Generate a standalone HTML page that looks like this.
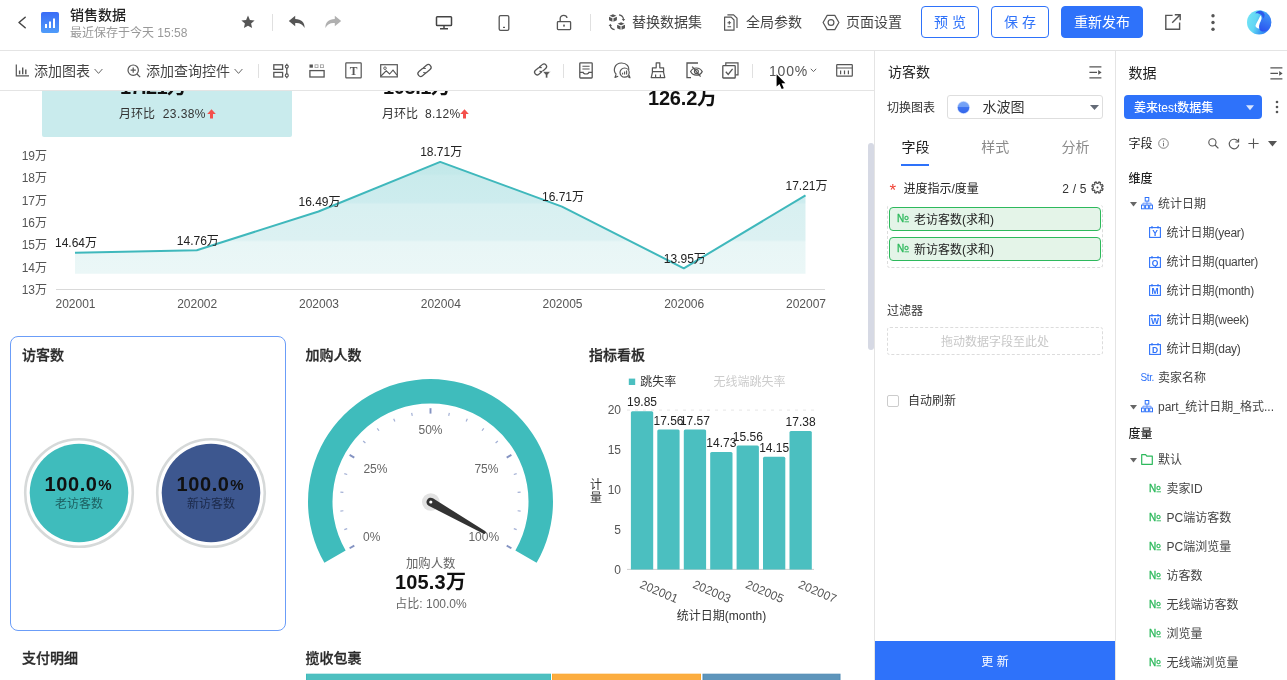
<!DOCTYPE html>
<html lang="zh-CN">
<head>
<meta charset="utf-8">
<title>销售数据</title>
<style>
*{box-sizing:border-box;margin:0;padding:0}
html,body{width:1287px;height:680px;overflow:hidden;background:#fff}
body{font-family:"Liberation Sans","Noto Sans CJK SC",sans-serif;font-size:12px;color:#333;position:relative;will-change:transform}
.abs{position:absolute}
.t{position:absolute;white-space:nowrap;line-height:1}
svg{position:absolute;overflow:visible}
svg text{font-family:"Liberation Sans","Noto Sans CJK SC",sans-serif}
/* header */
#hdr{position:absolute;left:0;top:0;width:1287px;height:51px;border-bottom:1px solid #e4e4e4;background:#fff}
#tb{position:absolute;left:0;top:51px;width:874px;height:40px;border-bottom:1px solid #e4e4e4;background:#fff}
.vsep{position:absolute;width:1px;background:#e0e0e0}
.btn{position:absolute;top:6px;height:32px;border-radius:4px;font-size:14px;line-height:30px;text-align:center;border:1px solid #2e72fa;color:#2e72fa;background:#fff}
.btn.pri{background:#2e72fa;color:#fff}
/* canvas */
#cv{position:absolute;left:0;top:91px;width:875px;height:589px;overflow:hidden;background:#fff}
/* panels */
#p1{position:absolute;left:874px;top:51px;width:241px;height:629px;border-left:1px solid #e4e4e4;background:#fff}
#p2{position:absolute;left:1115px;top:51px;width:172px;height:629px;border-left:1px solid #e4e4e4;background:#fff}
.fld{position:absolute;left:13px;width:213px;height:26px;border:1px solid #2db95c;border-radius:3px;background:#e3f4e8;font-size:12px;line-height:24px;color:#222}
.no{color:#2db95c;font-size:9px;letter-spacing:-0.5px}
.row{position:absolute;left:0;height:20px;line-height:20px;font-size:12px;color:#444;white-space:nowrap}
</style>
</head>
<body>
<div id="hdr">
<!-- back chevron -->
<svg style="left:16px;top:14px" width="14" height="16" viewBox="0 0 14 16"><path d="M9.2 3.2 L3 8.5 L9.2 13.8" fill="none" stroke="#444" stroke-width="1.5" stroke-linecap="round" stroke-linejoin="round"/></svg>
<!-- app icon -->
<svg style="left:41px;top:12px" width="18" height="21" viewBox="0 0 18 21"><defs><linearGradient id="gi" x1="0" y1="0" x2="0" y2="1"><stop offset="0" stop-color="#3a6cf6"/><stop offset="1" stop-color="#4f9cfa"/></linearGradient></defs><rect width="18" height="21" rx="2" fill="url(#gi)"/><rect x="4" y="12" width="2" height="4" fill="#fff"/><rect x="8" y="9.5" width="2" height="6.5" fill="#fff"/><rect x="12" y="6.5" width="2" height="9.5" fill="#fff"/></svg>
<div class="t" style="left:70px;top:8px;font-size:14px;font-weight:500;color:#222;line-height:15px">销售数据</div>
<div class="t" style="left:70px;top:27px;font-size:12px;color:#999;line-height:13px">最近保存于今天 15:58</div>
<!-- star -->
<svg style="left:241px;top:15px" width="14" height="14" viewBox="0 0 14 14"><path d="M7 0.6 L8.9 4.9 L13.6 5.4 L10.1 8.5 L11.1 13.1 L7 10.7 L2.9 13.1 L3.9 8.5 L0.4 5.4 L5.1 4.9 Z" fill="#555"/></svg>
<div class="vsep" style="left:272px;top:14px;height:17px"></div>
<!-- undo -->
<svg style="left:288px;top:15px" width="18" height="14" viewBox="0 0 18 14"><path d="M7.2 0.8 L0.8 6 L7.2 11.2 L7.2 8 C11.5 7.6 14.5 9 16.6 13 C16.8 7.6 13.5 4.2 7.2 4 Z" fill="#555"/></svg>
<!-- redo -->
<svg style="left:324px;top:15px" width="18" height="14" viewBox="0 0 18 14"><path d="M10.8 0.8 L17.2 6 L10.8 11.2 L10.8 8 C6.5 7.6 3.5 9 1.4 13 C1.2 7.6 4.5 4.2 10.8 4 Z" fill="#b0b0b0"/></svg>
<!-- monitor -->
<svg style="left:435px;top:15px" width="18" height="16" viewBox="0 0 18 16"><rect x="1.5" y="1.8" width="15" height="8.8" rx="0.8" fill="none" stroke="#444" stroke-width="1.5"/><path d="M9 10.6 V13.6 M5 13.8 H13" stroke="#444" stroke-width="1.5" fill="none"/></svg>
<!-- phone -->
<svg style="left:498px;top:14px" width="12" height="18" viewBox="0 0 12 18"><rect x="1.2" y="1.6" width="9.6" height="14.8" rx="1.4" fill="none" stroke="#555" stroke-width="1.3"/><rect x="5" y="12.8" width="2" height="1.2" fill="#555"/></svg>
<!-- lock -->
<svg style="left:556px;top:14px" width="16" height="17" viewBox="0 0 16 17"><rect x="1.4" y="7.6" width="13.2" height="8" rx="0.8" fill="none" stroke="#555" stroke-width="1.3"/><path d="M4.2 7.6 V4.6 C4.2 2.6 5.8 1.4 7.6 1.4 C9.4 1.4 10.8 2.4 11 4" fill="none" stroke="#555" stroke-width="1.3"/><rect x="7.2" y="10.6" width="1.6" height="2" fill="#555"/></svg>
<div class="vsep" style="left:590px;top:14px;height:17px"></div>
<!-- replace dataset icon -->
<svg style="left:607px;top:13px" width="20" height="19" viewBox="0 0 20 19"><g fill="#555"><path d="M2.5 2.8 L5.95 1.3 L9.4 2.8 L5.95 4.3 Z"/><path d="M2 3.7 L5.45 5.2 V8.8 L2 7.3 Z"/><path d="M9.9 3.7 L6.45 5.2 V8.8 L9.9 7.3 Z"/><path d="M10.6 10.8 L14.05 9.3 L17.5 10.8 L14.05 12.3 Z"/><path d="M10.1 11.7 L13.55 13.2 V16.8 L10.1 15.3 Z"/><path d="M18 11.7 L14.55 13.2 V16.8 L18 15.3 Z"/><path d="M14.8 5.9 H18.2 L16.5 8.2 Z"/><path d="M1.6 13 H5 L3.3 10.7 Z"/></g><path d="M12 1.9 C14.6 2.3 16.2 3.8 16.5 6.2" fill="none" stroke="#555" stroke-width="1.2"/><path d="M7.6 16.6 C5 16.2 3.6 14.8 3.3 12.6" fill="none" stroke="#555" stroke-width="1.2"/></svg>
<div class="t" style="left:632px;top:15px;font-size:14px;color:#444;line-height:15px">替换数据集</div>
<!-- global params icon -->
<svg style="left:723px;top:13px" width="16" height="19" viewBox="0 0 16 19"><path d="M1.6 4.2 H8.2 L11 7 V17.2 H1.6 Z" fill="none" stroke="#555" stroke-width="1.2" stroke-linejoin="round"/><path d="M4.4 1.8 H10.6 L14 5.2 V15" fill="none" stroke="#555" stroke-width="1.2" stroke-linejoin="round"/><path d="M6.3 8 V11.6 M4.5 9.8 H8.1 M4.5 13.8 H8.1" stroke="#555" stroke-width="1.1" fill="none"/></svg>
<div class="t" style="left:746px;top:15px;font-size:14px;color:#444;line-height:15px">全局参数</div>
<!-- page settings icon -->
<svg style="left:822px;top:14px" width="18" height="17" viewBox="0 0 18 17"><path d="M5.2 1.4 H12.8 L16.9 8.5 L12.8 15.6 H5.2 L1.1 8.5 Z" fill="none" stroke="#555" stroke-width="1.2" stroke-linejoin="round"/><circle cx="9" cy="8.5" r="2.9" fill="none" stroke="#555" stroke-width="1.2"/></svg>
<div class="t" style="left:846px;top:15px;font-size:14px;color:#444;line-height:15px">页面设置</div>
<div class="btn" style="left:921px;width:58px">预 览</div>
<div class="btn" style="left:991px;width:58px">保 存</div>
<div class="btn pri" style="left:1061px;width:82px">重新发布</div>
<!-- share -->
<svg style="left:1164px;top:13px" width="18" height="18" viewBox="0 0 18 18"><path d="M8.6 2.4 H1.8 V16.2 H15.6 V9.6" fill="none" stroke="#555" stroke-width="1.4"/><path d="M8.2 9.8 L16.2 1.8 M10.8 1.8 H16.2 V7.2" fill="none" stroke="#555" stroke-width="1.4"/></svg>
<!-- dots -->
<svg style="left:1210px;top:13px" width="6" height="19" viewBox="0 0 6 19"><circle cx="3" cy="2.7" r="1.7" fill="#555"/><circle cx="3" cy="9.5" r="1.7" fill="#555"/><circle cx="3" cy="16.3" r="1.7" fill="#555"/></svg>
<!-- logo -->
<svg style="left:1247px;top:10px" width="25" height="25" viewBox="0 0 25 25"><defs><linearGradient id="lg1" x1="0" y1="0" x2="1" y2="0.3"><stop offset="0" stop-color="#74e6f6"/><stop offset="0.45" stop-color="#62d6f4"/><stop offset="0.75" stop-color="#3a9df3"/><stop offset="1" stop-color="#2f7af4"/></linearGradient><linearGradient id="lg2" x1="0.6" y1="0" x2="0.3" y2="1"><stop offset="0" stop-color="#3f95f7"/><stop offset="1" stop-color="#2a52ef"/></linearGradient></defs><circle cx="12.1" cy="12.4" r="12.1" fill="url(#lg1)"/><path d="M14.6 3.6 C20.5 2.6 24.6 8 24.2 13 C23.8 19 19 22.4 15.2 21.4 C11.6 20.4 11.4 16.2 13.4 12.2 C15 9 16 6.6 14.6 3.6 Z" fill="url(#lg2)"/><path d="M8.2 3.4 C10 0.4 14.6 -0.4 16.9 2.8 C18.2 4.8 17.6 7.2 16.2 8.6 C15.6 5.2 12 2.6 8.2 3.4 Z" fill="#2c5bec"/><path d="M13.4 5.6 C14.9 7.2 14.8 8.8 13.6 11.2 C12 14.2 11.7 16.2 12.3 18.8 C10.2 18.4 8.2 17.2 8.5 15.6 C9.4 12.8 12.2 8.8 13.4 5.6 Z" fill="#fff"/></svg>
</div>
<div id="tb">
<!-- add chart icon -->
<svg style="left:15px;top:13px" width="15" height="13" viewBox="0 0 15 13"><path d="M1.3 0.4 V11.9 H14" fill="none" stroke="#555" stroke-width="1.2"/><path d="M4.6 10.2 V6.4 M7.7 10.2 V3.4 M10.8 10.2 V5.4" stroke="#555" stroke-width="1.4" fill="none"/></svg>
<div class="t" style="left:34px;top:13px;font-size:14px;color:#444;line-height:15px">添加图表</div>
<svg style="left:93.5px;top:16.6px" width="9" height="7" viewBox="0 0 9 7"><path d="M0.6 1 L4.5 5.4 L8.4 1" fill="none" stroke="#666" stroke-width="1"/></svg>
<!-- add query icon -->
<svg style="left:127px;top:13px" width="14" height="14" viewBox="0 0 14 14"><circle cx="6.2" cy="6.2" r="5.2" fill="none" stroke="#555" stroke-width="1.2"/><path d="M10 10 L13.2 13.2 M3.6 6.2 H8.8 M6.2 3.6 V8.8" stroke="#555" stroke-width="1.2" fill="none"/></svg>
<div class="t" style="left:146px;top:13px;font-size:14px;color:#444;line-height:15px">添加查询控件</div>
<svg style="left:233.5px;top:16.6px" width="9" height="7" viewBox="0 0 9 7"><path d="M0.6 1 L4.5 5.4 L8.4 1" fill="none" stroke="#666" stroke-width="1"/></svg>
<div class="vsep" style="left:258px;top:13px;height:14px"></div>
<!-- filter bar -->
<svg style="left:273px;top:12px" width="17" height="16" viewBox="0 0 17 16"><rect x="0.8" y="1.8" width="8.8" height="4.6" fill="none" stroke="#555" stroke-width="1.3"/><rect x="0.8" y="9.4" width="8.8" height="4.6" fill="none" stroke="#555" stroke-width="1.3"/><path d="M13.8 0.8 V15.2" stroke="#555" stroke-width="1.3"/><circle cx="13.8" cy="3.6" r="1.5" fill="#fff" stroke="#555" stroke-width="1.1"/><circle cx="13.8" cy="12.4" r="1.5" fill="#fff" stroke="#555" stroke-width="1.1"/></svg>
<!-- tabs -->
<svg style="left:309px;top:13px" width="16" height="14" viewBox="0 0 16 14"><rect x="0.5" y="0.5" width="3.4" height="3.2" fill="#555"/><rect x="6" y="0.8" width="3" height="2.8" fill="none" stroke="#999" stroke-width="0.8"/><rect x="11.4" y="0.8" width="3" height="2.8" fill="none" stroke="#999" stroke-width="0.8"/><rect x="0.9" y="6.6" width="14.2" height="6.4" fill="none" stroke="#555" stroke-width="1.3"/></svg>
<!-- text -->
<svg style="left:345px;top:11px" width="17" height="17" viewBox="0 0 17 17"><rect x="0.8" y="0.8" width="15.4" height="15" rx="0.6" fill="none" stroke="#555" stroke-width="1.2"/><text x="8.5" y="12.6" font-size="11.5" font-weight="700" text-anchor="middle" fill="#555" style="font-family:'Liberation Serif',serif">T</text></svg>
<!-- image -->
<svg style="left:380px;top:13px" width="18" height="14" viewBox="0 0 18 14"><rect x="0.7" y="0.7" width="16.6" height="12.2" fill="none" stroke="#555" stroke-width="1.2"/><circle cx="5" cy="4.2" r="1.3" fill="none" stroke="#555" stroke-width="0.9"/><path d="M1 12 L6.2 6.8 L9.6 10 L13 6.2 L17 11.2" fill="none" stroke="#555" stroke-width="1.1"/></svg>
<!-- link -->
<svg style="left:416px;top:11px" width="17" height="17" viewBox="0 0 17 17"><g transform="rotate(-40 8.5 8.5)" fill="none" stroke="#555" stroke-width="1.25" stroke-linecap="round"><path d="M7.4 11.3 H3.6 A2.8 2.8 0 0 1 3.6 5.7 H7.8 A2.8 2.8 0 0 1 10.4 7.4"/><path d="M9.6 5.7 H13.4 A2.8 2.8 0 0 1 13.4 11.3 H9.2 A2.8 2.8 0 0 1 6.6 9.6"/></g></svg>
<!-- link filter -->
<svg style="left:533px;top:11px" width="18" height="17" viewBox="0 0 18 17"><g transform="rotate(-40 7.5 7.5)" fill="none" stroke="#555" stroke-width="1.25" stroke-linecap="round"><path d="M6.6 10.1 H3.2 A2.6 2.6 0 0 1 3.2 4.9 H6.8 A2.6 2.6 0 0 1 9.2 6.5"/><path d="M8.6 4.9 H12 A2.6 2.6 0 0 1 12 10.1 H8.4 A2.6 2.6 0 0 1 6 8.5"/></g><path d="M9.6 9.6 H17.6 L14.8 12.8 V16 H12.4 V12.8 Z" fill="#555" stroke="#fff" stroke-width="0.7"/></svg>
<div class="vsep" style="left:563px;top:13px;height:14px"></div>
<!-- doc -->
<svg style="left:579px;top:11px" width="14" height="17" viewBox="0 0 14 17"><rect x="0.8" y="0.8" width="12.4" height="15.2" rx="0.8" fill="none" stroke="#555" stroke-width="1.3"/><path d="M3.4 4.2 H10.6 M3.4 7 H10.6" stroke="#555" stroke-width="1.1"/><path d="M1 10.4 H4.2 C4.4 12.6 9.6 12.6 9.8 10.4 H13" fill="none" stroke="#555" stroke-width="1.1"/></svg>
<!-- chat chart -->
<svg style="left:613px;top:11px" width="18" height="17" viewBox="0 0 18 17"><path d="M3.2 12.2 C-0.4 8.6 1.4 1 8.6 1 C14 1 16.4 5 15.8 8" fill="none" stroke="#555" stroke-width="1.2"/><path d="M3.2 12.2 L2 15.4 L5.2 14.2" fill="none" stroke="#555" stroke-width="1.2" stroke-linejoin="round"/><circle cx="11.6" cy="10.6" r="4.6" fill="#fff" stroke="#555" stroke-width="1.2"/><path d="M9.6 12.4 V10.8 M11.6 12.4 V9.6 M13.6 12.4 V8.4" stroke="#555" stroke-width="1.1"/><path d="M14.6 14.4 L17 15.8 L16 13" fill="none" stroke="#555" stroke-width="1.1" stroke-linejoin="round"/></svg>
<!-- brush -->
<svg style="left:650px;top:11px" width="16" height="17" viewBox="0 0 16 17"><path d="M6.2 0.8 H9.8 V5.8 H13.6 V9.6 H2.4 V5.8 H6.2 Z" fill="none" stroke="#555" stroke-width="1.2" stroke-linejoin="round"/><path d="M2.6 9.6 L1.2 15.6 H14.8 L13.4 9.6 M5.6 15.4 V12.4 M10.4 15.4 V12.4" fill="none" stroke="#555" stroke-width="1.2" stroke-linejoin="round"/></svg>
<!-- eye hidden -->
<svg style="left:686px;top:11px" width="17" height="17" viewBox="0 0 17 17"><path d="M12 1 H1 V15.6 H5" fill="none" stroke="#555" stroke-width="1.3"/><path d="M4.6 9.6 C7 4.8 13.6 4.8 16.2 9.6 C13.6 14.4 7 14.4 4.6 9.6 Z" fill="#fff" stroke="#555" stroke-width="1.2"/><circle cx="10.4" cy="9.6" r="2" fill="none" stroke="#555" stroke-width="1.1"/><path d="M6.2 4.6 L14.6 14.6" stroke="#555" stroke-width="1.2"/></svg>
<!-- check -->
<svg style="left:722px;top:11px" width="17" height="17" viewBox="0 0 17 17"><path d="M3.8 3 V0.8 H16 V12.8 H13.6" fill="none" stroke="#555" stroke-width="1.2"/><rect x="0.8" y="3.6" width="12.4" height="12.4" rx="0.6" fill="none" stroke="#555" stroke-width="1.3"/><path d="M3.8 9.8 L6.2 12.4 L10.6 6.8" fill="none" stroke="#555" stroke-width="1.3"/></svg>
<div class="vsep" style="left:752px;top:13px;height:14px"></div>
<div class="t" style="left:769px;top:13px;font-size:14px;color:#555;line-height:15px;letter-spacing:0.8px">100%</div>
<svg style="left:810px;top:17px" width="7" height="5" viewBox="0 0 7 5"><path d="M0.8 0.8 L3.5 3.6 L6.2 0.8" fill="none" stroke="#666" stroke-width="1"/></svg>
<!-- table -->
<svg style="left:836px;top:13px" width="17" height="13" viewBox="0 0 17 13"><rect x="0.7" y="0.7" width="15.6" height="11.4" rx="0.6" fill="none" stroke="#555" stroke-width="1.2"/><path d="M0.8 4 H16.2 M4.6 6.6 V10.2 M8.5 6.6 V10.2 M12.4 6.6 V10.2" stroke="#555" stroke-width="1.2"/></svg>
</div>
<div id="cv">
<div class="abs" style="left:42px;top:0;width:250px;height:46px;background:#c9ebed;border-radius:0 0 2px 2px"></div>
<div class="t" style="left:120px;top:-16.5px;font-size:20px;font-weight:700;color:#111;line-height:24px;letter-spacing:-0.6px">17.21万</div>
<div class="t" style="left:119px;top:16px;font-size:12px;color:#333;line-height:14px">月环比</div><div class="t" style="left:162.8px;top:16px;font-size:12px;color:#333;line-height:14px;letter-spacing:0.4px">23.38%</div>
<div class="t" style="left:383px;top:-16.5px;font-size:20px;font-weight:700;color:#111;line-height:24px;letter-spacing:-0.4px">105.1万</div>
<div class="t" style="left:382px;top:16px;font-size:12px;color:#333;line-height:14px">月环比</div><div class="t" style="left:425px;top:16px;font-size:12px;color:#333;line-height:14px;letter-spacing:0.3px">8.12%</div>
<div class="t" style="left:648px;top:-5.199999999999999px;font-size:20px;font-weight:700;color:#111;line-height:24px;letter-spacing:-0.2px">126.2万</div>
<svg style="left:206.5px;top:18px" width="9" height="10" viewBox="0 0 9 10"><path d="M4.5 0.2 L8.8 4.9 H6 V9.6 H3 V4.9 H0.2 Z" fill="#f4504c"/></svg>
<svg style="left:459.5px;top:18px" width="9" height="10" viewBox="0 0 9 10"><path d="M4.5 0.2 L8.8 4.9 H6 V9.6 H3 V4.9 H0.2 Z" fill="#f4504c"/></svg>
<svg style="left:0;top:0" width="875" height="240" viewBox="0 0 875 240">
<defs><linearGradient id="ag" gradientUnits="userSpaceOnUse" x1="0" y1="69" x2="0" y2="183"><stop offset="0" stop-color="#c2e8e9"/><stop offset="0.12" stop-color="#c4e9ea"/><stop offset="0.14" stop-color="#caebec"/><stop offset="0.37" stop-color="#cdecee"/><stop offset="0.39" stop-color="#d8f0f1"/><stop offset="0.70" stop-color="#dcf1f2"/><stop offset="0.72" stop-color="#e8f6f6"/><stop offset="1" stop-color="#ebf7f7"/></linearGradient></defs>
<path d="M56 198.5 H825" stroke="#d9d9d9" stroke-width="1"/>
<path d="M75.0 161.8 L196.8 159.2 L318.5 120.5 L440.2 70.9 L562.0 115.6 L683.8 177.3 L805.5 104.4 L805.5 182.8 L75.0 182.8 Z" fill="url(#ag)"/>
<path d="M75.0 161.8 L196.8 159.2 L318.5 120.5 L440.2 70.9 L562.0 115.6 L683.8 177.3 L805.5 104.4" fill="none" stroke="#3fb8bc" stroke-width="2" stroke-linejoin="round"/>
<text x="47" y="68.9" font-size="12" fill="#555" text-anchor="end">19万</text>
<text x="47" y="91.2" font-size="12" fill="#555" text-anchor="end">18万</text>
<text x="47" y="113.6" font-size="12" fill="#555" text-anchor="end">17万</text>
<text x="47" y="136.0" font-size="12" fill="#555" text-anchor="end">16万</text>
<text x="47" y="158.3" font-size="12" fill="#555" text-anchor="end">15万</text>
<text x="47" y="180.7" font-size="12" fill="#555" text-anchor="end">14万</text>
<text x="47" y="203.0" font-size="12" fill="#555" text-anchor="end">13万</text>
<text x="75.5" y="217.1" font-size="12" fill="#555" text-anchor="middle">202001</text>
<text x="197.2" y="217.1" font-size="12" fill="#555" text-anchor="middle">202002</text>
<text x="319.0" y="217.1" font-size="12" fill="#555" text-anchor="middle">202003</text>
<text x="440.8" y="217.1" font-size="12" fill="#555" text-anchor="middle">202004</text>
<text x="562.5" y="217.1" font-size="12" fill="#555" text-anchor="middle">202005</text>
<text x="684.2" y="217.1" font-size="12" fill="#555" text-anchor="middle">202006</text>
<text x="806.0" y="217.1" font-size="12" fill="#555" text-anchor="middle">202007</text>
<text x="76.0" y="156.2" font-size="12" fill="#222" text-anchor="middle">14.64万</text>
<text x="197.8" y="153.5" font-size="12" fill="#222" text-anchor="middle">14.76万</text>
<text x="319.5" y="114.8" font-size="12" fill="#222" text-anchor="middle">16.49万</text>
<text x="441.2" y="65.2" font-size="12" fill="#222" text-anchor="middle">18.71万</text>
<text x="563.0" y="109.9" font-size="12" fill="#222" text-anchor="middle">16.71万</text>
<text x="684.8" y="171.6" font-size="12" fill="#222" text-anchor="middle">13.95万</text>
<text x="806.5" y="98.7" font-size="12" fill="#222" text-anchor="middle">17.21万</text>
</svg>
<div class="abs" style="left:868px;top:51.5px;width:6px;height:207px;border-radius:3px;background:#d6d9e4"></div>
<div class="abs" style="left:10px;top:245px;width:276px;height:295px;border:1px solid #6b9df8;border-radius:8px"></div>
<div class="t" style="left:22px;top:255.5px;font-size:14px;font-weight:500;color:#2a2a2a;line-height:16px;-webkit-text-stroke:0.3px #2a2a2a">访客数</div>
<div class="t" style="left:305.5px;top:255.5px;font-size:14px;font-weight:500;color:#2a2a2a;line-height:16px;-webkit-text-stroke:0.3px #2a2a2a">加购人数</div>
<div class="t" style="left:589px;top:255.5px;font-size:14px;font-weight:500;color:#2a2a2a;line-height:16px;-webkit-text-stroke:0.3px #2a2a2a">指标看板</div>
<div class="t" style="left:22px;top:559px;font-size:14px;font-weight:500;color:#2a2a2a;line-height:16px;-webkit-text-stroke:0.3px #2a2a2a">支付明细</div>
<div class="t" style="left:305.5px;top:559px;font-size:14px;font-weight:500;color:#2a2a2a;line-height:16px;-webkit-text-stroke:0.3px #2a2a2a">揽收包裹</div>
<svg style="left:23px;top:345.8px" width="112" height="112" viewBox="-56 -56 112 112"><circle r="53.8" fill="none" stroke="#d6d9d9" stroke-width="2.6"/><circle r="49.3" fill="#3fbcbc"/><text x="-8" y="-2.4" font-size="20" font-weight="700" fill="#111" text-anchor="middle" letter-spacing="0.6">100.0</text><text x="25.9" y="-3.2" font-size="15" font-weight="700" fill="#111" text-anchor="middle">%</text><text x="0" y="14.6" font-size="12" fill="#1d5f60" text-anchor="middle">老访客数</text></svg>
<svg style="left:154.5px;top:345.8px" width="112" height="112" viewBox="-56 -56 112 112"><circle r="53.8" fill="none" stroke="#d6d9d9" stroke-width="2.6"/><circle r="49.3" fill="#3d578f"/><text x="-8" y="-2.4" font-size="20" font-weight="700" fill="#111" text-anchor="middle" letter-spacing="0.6">100.0</text><text x="25.9" y="-3.2" font-size="15" font-weight="700" fill="#111" text-anchor="middle">%</text><text x="0" y="14.6" font-size="12" fill="#1c2a4a" text-anchor="middle">新访客数</text></svg>
<svg style="left:0;top:0" width="875" height="589" viewBox="0 91 875 589">
<path d="M324.41 562.85 A122.5 122.5 0 1 1 536.59 562.85 L515.37 550.60 A98 98 0 1 0 345.63 550.60 Z" fill="#3fbcbc"/>
<path d="M349.61 548.30 L354.29 545.60" stroke="#8493c2" stroke-width="1.9"/>
<path d="M344.33 529.60 L347.19 528.67" stroke="#a3b0d5" stroke-width="1.2"/>
<path d="M340.40 511.07 L343.38 510.76" stroke="#a3b0d5" stroke-width="1.2"/>
<path d="M340.40 492.13 L343.38 492.44" stroke="#a3b0d5" stroke-width="1.2"/>
<path d="M344.33 473.60 L347.19 474.53" stroke="#a3b0d5" stroke-width="1.2"/>
<path d="M349.61 454.90 L354.29 457.60" stroke="#8493c2" stroke-width="1.9"/>
<path d="M363.17 440.98 L365.40 442.98" stroke="#a3b0d5" stroke-width="1.2"/>
<path d="M377.25 428.30 L379.01 430.73" stroke="#a3b0d5" stroke-width="1.2"/>
<path d="M393.65 418.83 L394.87 421.57" stroke="#a3b0d5" stroke-width="1.2"/>
<path d="M411.66 412.98 L412.29 415.91" stroke="#a3b0d5" stroke-width="1.2"/>
<path d="M430.50 408.20 L430.50 413.60" stroke="#8493c2" stroke-width="1.9"/>
<path d="M449.34 412.98 L448.71 415.91" stroke="#a3b0d5" stroke-width="1.2"/>
<path d="M467.35 418.83 L466.13 421.57" stroke="#a3b0d5" stroke-width="1.2"/>
<path d="M483.75 428.30 L481.99 430.73" stroke="#a3b0d5" stroke-width="1.2"/>
<path d="M497.83 440.98 L495.60 442.98" stroke="#a3b0d5" stroke-width="1.2"/>
<path d="M511.39 454.90 L506.71 457.60" stroke="#8493c2" stroke-width="1.9"/>
<path d="M516.67 473.60 L513.81 474.53" stroke="#a3b0d5" stroke-width="1.2"/>
<path d="M520.60 492.13 L517.62 492.44" stroke="#a3b0d5" stroke-width="1.2"/>
<path d="M520.60 511.07 L517.62 510.76" stroke="#a3b0d5" stroke-width="1.2"/>
<path d="M516.67 529.60 L513.81 528.67" stroke="#a3b0d5" stroke-width="1.2"/>
<path d="M511.39 548.30 L506.71 545.60" stroke="#8493c2" stroke-width="1.9"/>
<text x="371.7" y="540.5" font-size="12" fill="#666" text-anchor="middle">0%</text>
<text x="375.4" y="472.8" font-size="12" fill="#666" text-anchor="middle">25%</text>
<text x="430.5" y="433.90000000000003" font-size="12" fill="#666" text-anchor="middle">50%</text>
<text x="486.4" y="472.8" font-size="12" fill="#666" text-anchor="middle">75%</text>
<text x="483.8" y="540.5" font-size="12" fill="#666" text-anchor="middle">100%</text>
<circle cx="430.8" cy="502" r="8.8" fill="#e2e2e2"/>
<g transform="translate(430.8 502) rotate(29.6)"><path d="M0 -4.3 L61.5 -1.5 A1.5 1.5 0 0 1 61.5 1.5 L0 4.3 A4.3 4.3 0 0 1 0 -4.3 Z" fill="#333"/></g>
<circle cx="430.8" cy="502" r="1.6" fill="#fff"/>
<text x="430.7" y="567.6" font-size="12.4" fill="#666" text-anchor="middle">加购人数</text>
<text x="430.5" y="588.6" font-size="20" font-weight="700" fill="#111" text-anchor="middle" letter-spacing="0.2">105.3万</text>
<text x="431.0" y="607.8" font-size="12" fill="#666" text-anchor="middle">占比: 100.0%</text>
<rect x="628.8" y="378.6" width="6.4" height="6.4" fill="#4bbfc0"/>
<text x="640.3" y="385.8" font-size="12" fill="#333">跳失率</text>
<text x="713.4" y="385.8" font-size="12" fill="#ccc">无线端跳失率</text>
<path d="M627 410.1 H814" stroke="#e6e6e6" stroke-width="1" stroke-dasharray="3 5"/>
<text x="621" y="573.7" font-size="12" fill="#555" text-anchor="end">0</text>
<text x="621" y="533.9" font-size="12" fill="#555" text-anchor="end">5</text>
<text x="621" y="494.1" font-size="12" fill="#555" text-anchor="end">10</text>
<text x="621" y="454.2" font-size="12" fill="#555" text-anchor="end">15</text>
<text x="621" y="414.4" font-size="12" fill="#555" text-anchor="end">20</text>
<path d="M627 569.4 H814" stroke="#cfcfcf" stroke-width="1"/>
<path d="M630.9 569.4 V412.8 Q630.9 411.3 632.4 411.3 H651.7 Q653.2 411.3 653.2 412.8 V569.4 Z" fill="#4bbfc0"/>
<text x="642.0" y="406.3" font-size="12" fill="#222" text-anchor="middle">19.85</text>
<text transform="translate(639.0 587.5) rotate(23)" font-size="12" fill="#555">202001</text>
<path d="M657.3 569.4 V431.0 Q657.3 429.5 658.8 429.5 H678.1 Q679.6 429.5 679.6 431.0 V569.4 Z" fill="#4bbfc0"/>
<text x="668.5" y="424.5" font-size="12" fill="#222" text-anchor="middle">17.56</text>
<path d="M683.8 569.4 V431.0 Q683.8 429.5 685.3 429.5 H704.6 Q706.1 429.5 706.1 431.0 V569.4 Z" fill="#4bbfc0"/>
<text x="694.9" y="424.5" font-size="12" fill="#222" text-anchor="middle">17.57</text>
<text transform="translate(691.9 587.5) rotate(23)" font-size="12" fill="#555">202003</text>
<path d="M710.2 569.4 V453.6 Q710.2 452.1 711.7 452.1 H731.0 Q732.5 452.1 732.5 453.6 V569.4 Z" fill="#4bbfc0"/>
<text x="721.3" y="447.1" font-size="12" fill="#222" text-anchor="middle">14.73</text>
<path d="M736.6 569.4 V447.0 Q736.6 445.5 738.1 445.5 H757.4 Q758.9 445.5 758.9 447.0 V569.4 Z" fill="#4bbfc0"/>
<text x="747.8" y="440.5" font-size="12" fill="#222" text-anchor="middle">15.56</text>
<text transform="translate(744.8 587.5) rotate(23)" font-size="12" fill="#555">202005</text>
<path d="M763.0 569.4 V458.2 Q763.0 456.7 764.5 456.7 H783.8 Q785.3 456.7 785.3 458.2 V569.4 Z" fill="#4bbfc0"/>
<text x="774.2" y="451.7" font-size="12" fill="#222" text-anchor="middle">14.15</text>
<path d="M789.5 569.4 V432.5 Q789.5 431.0 791.0 431.0 H810.3 Q811.8 431.0 811.8 432.5 V569.4 Z" fill="#4bbfc0"/>
<text x="800.6" y="426.0" font-size="12" fill="#222" text-anchor="middle">17.38</text>
<text transform="translate(797.6 587.5) rotate(23)" font-size="12" fill="#555">202007</text>
<text x="721.5" y="620.2" font-size="12" fill="#333" text-anchor="middle">统计日期(month)</text>
<text x="596" y="489" font-size="12" fill="#333" text-anchor="middle">计</text>
<text x="596" y="501.5" font-size="12" fill="#333" text-anchor="middle">量</text>
<rect x="306.5" y="674.2" width="244" height="8" fill="#4ec0c0" stroke="#3ebabb" stroke-width="1"/>
<rect x="552.5" y="674.2" width="148" height="8" fill="#fcad40" stroke="#fba62c" stroke-width="1"/>
<rect x="703" y="674.2" width="137" height="8" fill="#5e95bb" stroke="#4f8ab4" stroke-width="1"/>
</svg>
<!--CV3-->
</div>
<div id="p1">
<div class="t" style="left:13px;top:11.8px;font-size:14px;line-height:18px;color:#222;font-weight:400;">访客数</div>
<svg style="left:213.5px;top:15.3px" width="13" height="13" viewBox="0 0 13 13"><path d="M0.4 0.9 H12.4 M0.4 6.4 H8 M0.4 11.9 H12.4" stroke="#555" stroke-width="1.2" fill="none"/><path d="M9.2 4.1 L12.6 6.4 L9.2 8.7 Z" fill="#555"/></svg>
<div class="t" style="left:12px;top:48.5px;font-size:12px;line-height:16px;color:#333;font-weight:400;">切换图表</div>
<div class="abs" style="left:72px;top:44px;width:155.5px;height:24px;border:1px solid #dedede;border-radius:3px"></div>
<svg style="left:82.2px;top:50.4px" width="13" height="13" viewBox="0 0 13 13"><defs><linearGradient id="wb" x1="0" y1="0" x2="0" y2="1"><stop offset="0" stop-color="#7aa6f7"/><stop offset="0.42" stop-color="#6f9ef6"/><stop offset="0.5" stop-color="#3f73f0"/><stop offset="1" stop-color="#3366ea"/></linearGradient></defs><circle cx="6.5" cy="6.5" r="6.4" fill="#c9dafc"/><circle cx="6.5" cy="6.5" r="5.7" fill="url(#wb)"/></svg>
<div class="t" style="left:107.5px;top:46.5px;font-size:14px;line-height:18px;color:#333;font-weight:400;">水波图</div>
<svg style="left:214.5px;top:54.2px" width="9" height="5" viewBox="0 0 9 5"><path d="M0 0 H9 L4.5 5 Z" fill="#636a76"/></svg>
<div class="t" style="left:26.5px;top:87.1px;font-size:14px;line-height:18px;color:#222;font-weight:400;">字段</div>
<div class="t" style="left:106.2px;top:87.1px;font-size:14px;line-height:18px;color:#8a8a8a;font-weight:400;">样式</div>
<div class="t" style="left:186.4px;top:87.1px;font-size:14px;line-height:18px;color:#8a8a8a;font-weight:400;">分析</div>
<div class="abs" style="left:26px;top:112.8px;width:28px;height:2px;background:#2e72fa"></div>
<div class="t" style="left:14.5px;top:130.5px;font-size:17px;line-height:17px;color:#f04134;font-weight:400;">*</div>
<div class="t" style="left:28.4px;top:130.0px;font-size:12px;line-height:16px;color:#222;font-weight:400;">进度指示/度量</div>
<div class="t" style="left:187.3px;top:130.0px;font-size:12px;line-height:16px;color:#333;font-weight:400;letter-spacing:0.2px">2 / 5</div>
<svg style="left:215.6px;top:130px" width="13" height="13" viewBox="-6.5 -6.5 13 13"><path d="M5.54 1.33 L4.86 2.98 L3.35 2.53 L2.53 3.35 L2.98 4.86 L1.33 5.54 L0.58 4.16 L-0.58 4.16 L-1.33 5.54 L-2.98 4.86 L-2.53 3.35 L-3.35 2.53 L-4.86 2.98 L-5.54 1.33 L-4.16 0.58 L-4.16 -0.58 L-5.54 -1.33 L-4.86 -2.98 L-3.35 -2.53 L-2.53 -3.35 L-2.98 -4.86 L-1.33 -5.54 L-0.58 -4.16 L0.58 -4.16 L1.33 -5.54 L2.98 -4.86 L2.53 -3.35 L3.35 -2.53 L4.86 -2.98 L5.54 -1.33 L4.16 -0.58 L4.16 0.58 Z" fill="none" stroke="#555" stroke-width="1.3" stroke-linejoin="round"/><circle r="1" fill="#444"/></svg>
<div class="abs" style="left:12px;top:153.5px;width:216px;height:63.5px;border:1px dashed #dcdcdc;border-top:none;border-radius:3px"></div>
<div class="abs" style="left:14px;top:156px;width:212px;height:24px;border:1px solid #2db95c;border-radius:4px;background:#e4f4e8"></div>
<svg style="left:22.3px;top:163.4px" width="13" height="10" viewBox="0 0 13 10"><text x="0" y="8.2" font-size="10" fill="#2db95c" stroke="#2db95c" stroke-width="0.3">N</text><text x="7.3" y="6.4" font-size="8" fill="#2db95c" stroke="#2db95c" stroke-width="0.3">o</text><path d="M7.5 7.8 H12" stroke="#2db95c" stroke-width="0.9"/></svg>
<div class="t" style="left:39px;top:161.1px;font-size:12px;line-height:16px;color:#222;font-weight:400;">老访客数(求和)</div>
<div class="abs" style="left:14px;top:186px;width:212px;height:24px;border:1px solid #2db95c;border-radius:4px;background:#e4f4e8"></div>
<svg style="left:22.3px;top:193.1px" width="13" height="10" viewBox="0 0 13 10"><text x="0" y="8.2" font-size="10" fill="#2db95c" stroke="#2db95c" stroke-width="0.3">N</text><text x="7.3" y="6.4" font-size="8" fill="#2db95c" stroke="#2db95c" stroke-width="0.3">o</text><path d="M7.5 7.8 H12" stroke="#2db95c" stroke-width="0.9"/></svg>
<div class="t" style="left:39px;top:190.8px;font-size:12px;line-height:16px;color:#222;font-weight:400;">新访客数(求和)</div>
<div class="t" style="left:12px;top:252.4px;font-size:12px;line-height:16px;color:#333;font-weight:400;">过滤器</div>
<div class="abs" style="left:12px;top:276px;width:216px;height:27.5px;border:1px dashed #dcdcdc;border-radius:3px"></div>
<div class="t" style="left:12px;width:216px;text-align:center;top:282.5px;font-size:12px;line-height:16px;color:#c8c8c8">拖动数据字段至此处</div>
<div class="abs" style="left:12px;top:344px;width:12px;height:12px;border:1px solid #ccc;border-radius:2px;background:#fff"></div>
<div class="t" style="left:33px;top:341.7px;font-size:12px;line-height:16px;color:#333;font-weight:400;">自动刷新</div>
<div class="abs" style="left:0;top:590px;width:240px;height:40px;background:#2e72fa;color:#fff;font-size:12px;line-height:42px;text-align:center">更 新</div>
</div>
<div id="p2">
<div class="t" style="left:12.6px;top:13.2px;font-size:14px;line-height:18px;color:#222;font-weight:400;">数据</div>
<svg style="left:154px;top:15.7px" width="13" height="13" viewBox="0 0 13 13"><path d="M0.4 0.9 H12.4 M0.4 6.4 H8 M0.4 11.9 H12.4" stroke="#555" stroke-width="1.2" fill="none"/><path d="M9.2 4.1 L12.6 6.4 L9.2 8.7 Z" fill="#555"/></svg>
<div class="abs" style="left:8px;top:44px;width:138px;height:23.5px;border-radius:4px;background:#2e72fa"></div>
<div class="t" style="left:18px;top:48.5px;font-size:12px;line-height:16px;color:#fff;font-weight:500;">姜来test数据集</div>
<svg style="left:129.6px;top:53.8px" width="8" height="5.4" viewBox="0 0 8 5"><path d="M0 0 H8 L4 5 Z" fill="#d9e5fe"/></svg>
<svg style="left:158.6px;top:49px" width="4" height="14" viewBox="0 0 4 14"><circle cx="2" cy="2" r="1.3" fill="#555"/><circle cx="2" cy="7" r="1.3" fill="#555"/><circle cx="2" cy="12" r="1.3" fill="#555"/></svg>
<div class="t" style="left:12.6px;top:84.6px;font-size:12px;line-height:16px;color:#222;font-weight:400;">字段</div>
<svg style="left:41.8px;top:87px" width="11" height="11" viewBox="0 0 11 11"><circle cx="5.5" cy="5.5" r="4.8" fill="none" stroke="#777" stroke-width="0.9"/><path d="M5.5 4.8 V8.2" stroke="#777" stroke-width="1"/><circle cx="5.5" cy="3.2" r="0.6" fill="#777"/></svg>
<svg style="left:91.5px;top:87px" width="11" height="11" viewBox="0 0 11 11"><circle cx="4.4" cy="4.4" r="3.6" fill="none" stroke="#555" stroke-width="1.1"/><path d="M7 7 L10.4 10.4" stroke="#555" stroke-width="1.2"/></svg>
<svg style="left:111.5px;top:86.6px" width="12" height="12" viewBox="0 0 12 12"><path d="M10.2 3.6 A4.8 4.8 0 1 0 10.8 6.6" fill="none" stroke="#555" stroke-width="1.1"/><path d="M10.6 0.8 V4 H7.4" fill="none" stroke="#555" stroke-width="1.1"/></svg>
<svg style="left:131.5px;top:87.4px" width="11" height="11" viewBox="0 0 11 11"><path d="M5.5 0.4 V10.6 M0.4 5.5 H10.6" stroke="#555" stroke-width="1.1"/></svg>
<svg style="left:152.4px;top:90.4px" width="9" height="5.6" viewBox="0 0 8 5"><path d="M0 0 H8 L4 5 Z" fill="#555"/></svg>
<div class="t" style="left:12.6px;top:119.6px;font-size:12px;line-height:16px;color:#222;font-weight:500;">维度</div>
<svg style="left:13.8px;top:151.2px" width="7" height="4.4" viewBox="0 0 8 5"><path d="M0 0 H8 L4 5 Z" fill="#666"/></svg>
<svg style="left:25px;top:146.0px" width="12" height="12.4" viewBox="0 0 12 12.4"><g fill="none" stroke="#2e72fa" stroke-width="1"><rect x="4.2" y="0.5" width="3.6" height="3.6"/><rect x="0.5" y="8.1" width="2.8" height="3.7"/><rect x="4.6" y="8.1" width="2.8" height="3.7"/><rect x="8.7" y="8.1" width="2.8" height="3.7"/><path d="M6 4.1 V8 M1.9 8 V6.2 H10.1 V8" stroke-width="0.9" stroke="#5a8bf8"/></g></svg>
<div class="t" style="left:42px;top:145.2px;font-size:12px;line-height:16px;color:#444;font-weight:400;">统计日期</div>
<svg style="left:33px;top:175.4px" width="12" height="12" viewBox="0 0 12 12"><rect x="0.6" y="1.6" width="10.8" height="9.8" fill="none" stroke="#2e72fa" stroke-width="1.1"/><path d="M3 0 V2.4 M9 0 V2.4" stroke="#2e72fa" stroke-width="1.1"/><text x="6" y="10" font-size="8.5" font-weight="700" fill="#2e72fa" text-anchor="middle">Y</text></svg>
<div class="t" style="left:50.6px;top:174px;font-size:12px;line-height:16px;color:#444;font-weight:400;">统计日期<span style="letter-spacing:-0.3px">(year)</span></div>
<svg style="left:33px;top:204.6px" width="12" height="12" viewBox="0 0 12 12"><rect x="0.6" y="1.6" width="10.8" height="9.8" fill="none" stroke="#2e72fa" stroke-width="1.1"/><path d="M3 0 V2.4 M9 0 V2.4" stroke="#2e72fa" stroke-width="1.1"/><text x="6" y="10" font-size="8.5" font-weight="700" fill="#2e72fa" text-anchor="middle">Q</text></svg>
<div class="t" style="left:50.6px;top:203px;font-size:12px;line-height:16px;color:#444;font-weight:400;">统计日期<span style="letter-spacing:-0.3px">(quarter)</span></div>
<svg style="left:33px;top:233.1px" width="12" height="12" viewBox="0 0 12 12"><rect x="0.6" y="1.6" width="10.8" height="9.8" fill="none" stroke="#2e72fa" stroke-width="1.1"/><path d="M3 0 V2.4 M9 0 V2.4" stroke="#2e72fa" stroke-width="1.1"/><text x="6" y="10" font-size="8.5" font-weight="700" fill="#2e72fa" text-anchor="middle">M</text></svg>
<div class="t" style="left:50.6px;top:231.5px;font-size:12px;line-height:16px;color:#444;font-weight:400;">统计日期<span style="letter-spacing:-0.3px">(month)</span></div>
<svg style="left:33px;top:262.5px" width="12" height="12" viewBox="0 0 12 12"><rect x="0.6" y="1.6" width="10.8" height="9.8" fill="none" stroke="#2e72fa" stroke-width="1.1"/><path d="M3 0 V2.4 M9 0 V2.4" stroke="#2e72fa" stroke-width="1.1"/><text x="6" y="10" font-size="8.5" font-weight="700" fill="#2e72fa" text-anchor="middle">W</text></svg>
<div class="t" style="left:50.6px;top:261px;font-size:12px;line-height:16px;color:#444;font-weight:400;">统计日期<span style="letter-spacing:-0.3px">(week)</span></div>
<svg style="left:33px;top:291.7px" width="12" height="12" viewBox="0 0 12 12"><rect x="0.6" y="1.6" width="10.8" height="9.8" fill="none" stroke="#2e72fa" stroke-width="1.1"/><path d="M3 0 V2.4 M9 0 V2.4" stroke="#2e72fa" stroke-width="1.1"/><text x="6" y="10" font-size="8.5" font-weight="700" fill="#2e72fa" text-anchor="middle">D</text></svg>
<div class="t" style="left:50.6px;top:290.1px;font-size:12px;line-height:16px;color:#444;font-weight:400;">统计日期<span style="letter-spacing:-0.3px">(day)</span></div>
<div class="t" style="left:24.6px;top:320.5px;font-size:10px;line-height:12px;color:#2e72fa;letter-spacing:-0.4px">Str.</div>
<div class="t" style="left:42px;top:318.5px;font-size:12px;line-height:16px;color:#444;font-weight:400;">卖家名称</div>
<svg style="left:13.8px;top:353.7px" width="7" height="4.4" viewBox="0 0 8 5"><path d="M0 0 H8 L4 5 Z" fill="#666"/></svg>
<svg style="left:25px;top:348.5px" width="12" height="12.4" viewBox="0 0 12 12.4"><g fill="none" stroke="#2e72fa" stroke-width="1"><rect x="4.2" y="0.5" width="3.6" height="3.6"/><rect x="0.5" y="8.1" width="2.8" height="3.7"/><rect x="4.6" y="8.1" width="2.8" height="3.7"/><rect x="8.7" y="8.1" width="2.8" height="3.7"/><path d="M6 4.1 V8 M1.9 8 V6.2 H10.1 V8" stroke-width="0.9" stroke="#5a8bf8"/></g></svg>
<div class="t" style="left:42px;top:347.7px;font-size:12px;line-height:16px;color:#444;font-weight:400;">part_统计日期_格式...</div>
<div class="t" style="left:12.6px;top:374.6px;font-size:12px;line-height:16px;color:#222;font-weight:500;">度量</div>
<svg style="left:13.8px;top:407px" width="7" height="4.4" viewBox="0 0 8 5"><path d="M0 0 H8 L4 5 Z" fill="#666"/></svg>
<svg style="left:25px;top:403px" width="12" height="11" viewBox="0 0 12 11"><path d="M0.7 0.7 H4.6 L5.8 2.2 H11.3 V10.3 H0.7 Z" fill="none" stroke="#2db95c" stroke-width="1.2" stroke-linejoin="round"/></svg>
<div class="t" style="left:42px;top:401.0px;font-size:12px;line-height:16px;color:#444;font-weight:400;">默认</div>
<svg style="left:32.8px;top:433.3px" width="13" height="10" viewBox="0 0 13 10"><text x="0" y="8.2" font-size="10" fill="#2db95c" stroke="#2db95c" stroke-width="0.3">N</text><text x="7.3" y="6.4" font-size="8" fill="#2db95c" stroke="#2db95c" stroke-width="0.3">o</text><path d="M7.5 7.8 H12" stroke="#2db95c" stroke-width="0.9"/></svg>
<div class="t" style="left:50.6px;top:430.2px;font-size:12px;line-height:16px;color:#444;font-weight:400;">卖家ID</div>
<svg style="left:32.8px;top:462.0px" width="13" height="10" viewBox="0 0 13 10"><text x="0" y="8.2" font-size="10" fill="#2db95c" stroke="#2db95c" stroke-width="0.3">N</text><text x="7.3" y="6.4" font-size="8" fill="#2db95c" stroke="#2db95c" stroke-width="0.3">o</text><path d="M7.5 7.8 H12" stroke="#2db95c" stroke-width="0.9"/></svg>
<div class="t" style="left:50.6px;top:458.9px;font-size:12px;line-height:16px;color:#444;font-weight:400;">PC端访客数</div>
<svg style="left:32.8px;top:491.2px" width="13" height="10" viewBox="0 0 13 10"><text x="0" y="8.2" font-size="10" fill="#2db95c" stroke="#2db95c" stroke-width="0.3">N</text><text x="7.3" y="6.4" font-size="8" fill="#2db95c" stroke="#2db95c" stroke-width="0.3">o</text><path d="M7.5 7.8 H12" stroke="#2db95c" stroke-width="0.9"/></svg>
<div class="t" style="left:50.6px;top:488.1px;font-size:12px;line-height:16px;color:#444;font-weight:400;">PC端浏览量</div>
<svg style="left:32.8px;top:520.4px" width="13" height="10" viewBox="0 0 13 10"><text x="0" y="8.2" font-size="10" fill="#2db95c" stroke="#2db95c" stroke-width="0.3">N</text><text x="7.3" y="6.4" font-size="8" fill="#2db95c" stroke="#2db95c" stroke-width="0.3">o</text><path d="M7.5 7.8 H12" stroke="#2db95c" stroke-width="0.9"/></svg>
<div class="t" style="left:50.6px;top:517.3px;font-size:12px;line-height:16px;color:#444;font-weight:400;">访客数</div>
<svg style="left:32.8px;top:549.1px" width="13" height="10" viewBox="0 0 13 10"><text x="0" y="8.2" font-size="10" fill="#2db95c" stroke="#2db95c" stroke-width="0.3">N</text><text x="7.3" y="6.4" font-size="8" fill="#2db95c" stroke="#2db95c" stroke-width="0.3">o</text><path d="M7.5 7.8 H12" stroke="#2db95c" stroke-width="0.9"/></svg>
<div class="t" style="left:50.6px;top:546.0px;font-size:12px;line-height:16px;color:#444;font-weight:400;">无线端访客数</div>
<svg style="left:32.8px;top:578.3px" width="13" height="10" viewBox="0 0 13 10"><text x="0" y="8.2" font-size="10" fill="#2db95c" stroke="#2db95c" stroke-width="0.3">N</text><text x="7.3" y="6.4" font-size="8" fill="#2db95c" stroke="#2db95c" stroke-width="0.3">o</text><path d="M7.5 7.8 H12" stroke="#2db95c" stroke-width="0.9"/></svg>
<div class="t" style="left:50.6px;top:575.2px;font-size:12px;line-height:16px;color:#444;font-weight:400;">浏览量</div>
<svg style="left:32.8px;top:607.1px" width="13" height="10" viewBox="0 0 13 10"><text x="0" y="8.2" font-size="10" fill="#2db95c" stroke="#2db95c" stroke-width="0.3">N</text><text x="7.3" y="6.4" font-size="8" fill="#2db95c" stroke="#2db95c" stroke-width="0.3">o</text><path d="M7.5 7.8 H12" stroke="#2db95c" stroke-width="0.9"/></svg>
<div class="t" style="left:50.6px;top:604.0px;font-size:12px;line-height:16px;color:#444;font-weight:400;">无线端浏览量</div>
</div>
<!-- mouse pointer -->
<svg style="left:0;top:0;z-index:50" width="1287" height="100" viewBox="0 0 1287 100"><path d="M776.6 74.2 V86.6 L779.5 84 L781.7 89.1 L783.8 88.2 L781.6 83.2 H785.4 Z" fill="#fff" stroke="#fff" stroke-width="2" stroke-linejoin="round" opacity="0.95"/><path d="M776.6 74.2 V86.6 L779.5 84 L781.7 89.1 L783.8 88.2 L781.6 83.2 H785.4 Z" fill="#000"/></svg>
</body>
</html>
